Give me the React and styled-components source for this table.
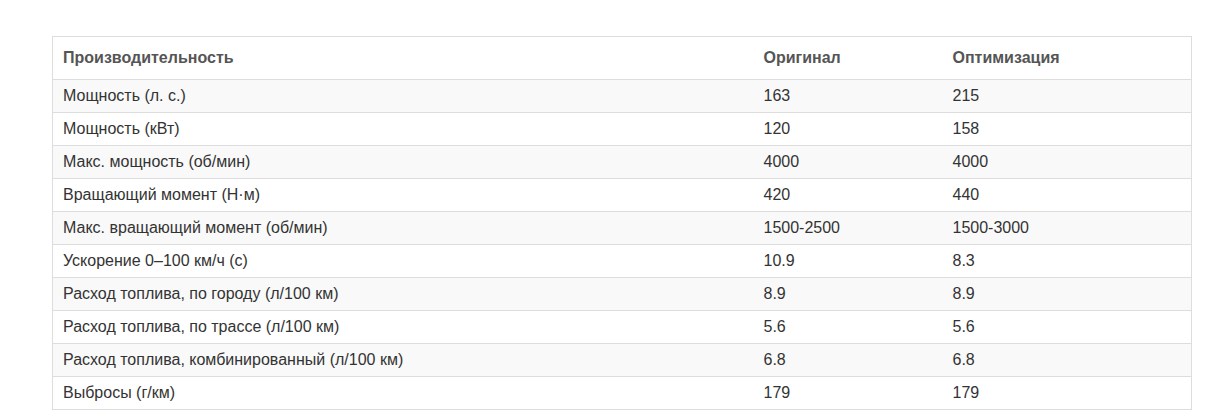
import React from "react";
import styled, { createGlobalStyle } from "styled-components";

const Global = createGlobalStyle`
  html, body { margin: 0; padding: 0; background: #fff; }
  body { font-family: "Liberation Sans", Arial, sans-serif; }
`;

const Page = styled.div`
  padding: 36px 0 0 52px;
`;

const Table = styled.table`
  width: 1140px;
  border-collapse: collapse;
  table-layout: fixed;
  border: 1px solid #dddddd;
  font-size: 16px;
  color: #333;
`;

const HeadCell = styled.th`
  height: 42px;
  padding: 0 10px;
  text-align: left;
  font-weight: bold;
  color: #555;
  border-bottom: 1px solid #dddddd;
  vertical-align: middle;
`;

const Row = styled.tr`
  background: ${(p) => (p.$striped ? "#f9f9f9" : "#ffffff")};
`;

const Cell = styled.td`
  height: 32px;
  padding: 0 10px;
  border-top: 1px solid #dddddd;
  vertical-align: middle;
  color: #333;
  white-space: nowrap;
`;

const rows = [
  ["Мощность (л. с.)", "163", "215"],
  ["Мощность (кВт)", "120", "158"],
  ["Макс. мощность (об/мин)", "4000", "4000"],
  ["Вращающий момент (Н·м)", "420", "440"],
  ["Макс. вращающий момент (об/мин)", "1500-2500", "1500-3000"],
  ["Ускорение 0–100 км/ч (с)", "10.9", "8.3"],
  ["Расход топлива, по городу (л/100 км)", "8.9", "8.9"],
  ["Расход топлива, по трассе (л/100 км)", "5.6", "5.6"],
  ["Расход топлива, комбинированный (л/100 км)", "6.8", "6.8"],
  ["Выбросы (г/км)", "179", "179"],
];

export default function App() {
  return (
    <>
      <Global />
      <Page>
        <Table>
          <colgroup>
            <col style={{ width: 701 }} />
            <col style={{ width: 189 }} />
            <col />
          </colgroup>
          <thead>
            <tr>
              <HeadCell>Производительность</HeadCell>
              <HeadCell>Оригинал</HeadCell>
              <HeadCell>Оптимизация</HeadCell>
            </tr>
          </thead>
          <tbody>
            {rows.map((r, i) => (
              <Row key={i} $striped={i % 2 === 0}>
                <Cell>{r[0]}</Cell>
                <Cell>{r[1]}</Cell>
                <Cell>{r[2]}</Cell>
              </Row>
            ))}
          </tbody>
        </Table>
      </Page>
    </>
  );
}
